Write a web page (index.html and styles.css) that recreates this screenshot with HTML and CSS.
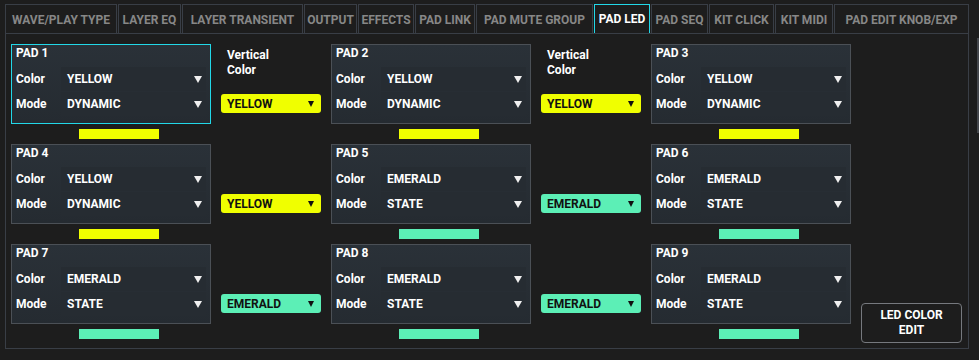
FILE: index.html
```html
<!DOCTYPE html>
<html lang="en">
<head>
    <meta charset="UTF-8">
    <title>Pad LED</title>
    <link rel="stylesheet" href="styles.css">
</head>
<body>
    <div class="tabs">
        <div class="tab">WAVE/PLAY TYPE</div>
        <div class="tab">LAYER EQ</div>
        <div class="tab">LAYER TRANSIENT</div>
        <div class="tab">OUTPUT</div>
        <div class="tab">EFFECTS</div>
        <div class="tab">PAD LINK</div>
        <div class="tab">PAD MUTE GROUP</div>
        <div class="tab active">PAD LED</div>
        <div class="tab">PAD SEQ</div>
        <div class="tab">KIT CLICK</div>
        <div class="tab">KIT MIDI</div>
        <div class="tab">PAD EDIT KNOB/EXP</div>
    </div>

    <div class="panel">
        <div class="scroll"></div>
        <div class="grid">
            <!-- row 1 -->
            <div class="pad-cell">
                <div class="card selected">
                    <div class="card-title">PAD 1</div>
                    <div class="row"><span>Color</span><div class="sel">YELLOW<i></i></div></div>
                    <div class="row"><span>Mode</span><div class="sel">DYNAMIC<i></i></div></div>
                </div>
                <div class="bar yellow"></div>
            </div>
            <div class="side first">
                <div class="vlabel">Vertical<br>Color</div>
                <div class="drop yellow">YELLOW<i></i></div>
            </div>
            <div class="pad-cell">
                <div class="card">
                    <div class="card-title">PAD 2</div>
                    <div class="row"><span>Color</span><div class="sel">YELLOW<i></i></div></div>
                    <div class="row"><span>Mode</span><div class="sel">DYNAMIC<i></i></div></div>
                </div>
                <div class="bar yellow"></div>
            </div>
            <div class="side first">
                <div class="vlabel">Vertical<br>Color</div>
                <div class="drop yellow">YELLOW<i></i></div>
            </div>
            <div class="pad-cell">
                <div class="card">
                    <div class="card-title">PAD 3</div>
                    <div class="row"><span>Color</span><div class="sel">YELLOW<i></i></div></div>
                    <div class="row"><span>Mode</span><div class="sel">DYNAMIC<i></i></div></div>
                </div>
                <div class="bar yellow"></div>
            </div>
            <div class="side"></div>

            <!-- row 2 -->
            <div class="pad-cell">
                <div class="card">
                    <div class="card-title">PAD 4</div>
                    <div class="row"><span>Color</span><div class="sel">YELLOW<i></i></div></div>
                    <div class="row"><span>Mode</span><div class="sel">DYNAMIC<i></i></div></div>
                </div>
                <div class="bar yellow"></div>
            </div>
            <div class="side">
                <div class="drop yellow">YELLOW<i></i></div>
            </div>
            <div class="pad-cell">
                <div class="card">
                    <div class="card-title">PAD 5</div>
                    <div class="row"><span>Color</span><div class="sel">EMERALD<i></i></div></div>
                    <div class="row"><span>Mode</span><div class="sel">STATE<i></i></div></div>
                </div>
                <div class="bar emerald"></div>
            </div>
            <div class="side">
                <div class="drop emerald">EMERALD<i></i></div>
            </div>
            <div class="pad-cell">
                <div class="card">
                    <div class="card-title">PAD 6</div>
                    <div class="row"><span>Color</span><div class="sel">EMERALD<i></i></div></div>
                    <div class="row"><span>Mode</span><div class="sel">STATE<i></i></div></div>
                </div>
                <div class="bar emerald"></div>
            </div>
            <div class="side"></div>

            <!-- row 3 -->
            <div class="pad-cell">
                <div class="card">
                    <div class="card-title">PAD 7</div>
                    <div class="row"><span>Color</span><div class="sel">EMERALD<i></i></div></div>
                    <div class="row"><span>Mode</span><div class="sel">STATE<i></i></div></div>
                </div>
                <div class="bar emerald"></div>
            </div>
            <div class="side">
                <div class="drop emerald">EMERALD<i></i></div>
            </div>
            <div class="pad-cell">
                <div class="card">
                    <div class="card-title">PAD 8</div>
                    <div class="row"><span>Color</span><div class="sel">EMERALD<i></i></div></div>
                    <div class="row"><span>Mode</span><div class="sel">STATE<i></i></div></div>
                </div>
                <div class="bar emerald"></div>
            </div>
            <div class="side">
                <div class="drop emerald">EMERALD<i></i></div>
            </div>
            <div class="pad-cell">
                <div class="card">
                    <div class="card-title">PAD 9</div>
                    <div class="row"><span>Color</span><div class="sel">EMERALD<i></i></div></div>
                    <div class="row"><span>Mode</span><div class="sel">STATE<i></i></div></div>
                </div>
                <div class="bar emerald"></div>
            </div>
            <div class="side">
                <button class="edit-btn">LED COLOR<br>EDIT</button>
            </div>
        </div>
    </div>
</body>
</html>
```

FILE: styles.css
```css
body {
    margin: 0;
    background-color: #1d1d1d;
    color: #ffffff;
    font-family: Roboto, "Liberation Sans", sans-serif;
    font-weight: 700;
    font-size: 12px;
}

.tabs {
    display: grid;
    grid-template-columns: 112px 63px 121px 53px 56px 60px 117px 56px 57px 65px 58px 135px;
    column-gap: 1px;
    padding: 4px 0 0 5px;
}

.tab {
    box-sizing: border-box;
    height: 30px;
    border: 1px solid #393e46;
    border-bottom: none;
    color: #878787;
    display: flex;
    align-items: center;
    justify-content: center;
    white-space: nowrap;
}

.tab.active {
    border: 1px solid #22d8e8;
    color: #ffffff;
}

.panel {
    position: relative;
    box-sizing: border-box;
    width: 964px;
    height: 316px;
    margin-left: 5px;
    margin-top: -1px;
    border: 1px solid #393e46;
    padding: 10px 0 0 5px;
}

.scroll {
    position: absolute;
    right: -11px;
    top: 4px;
    width: 2px;
    height: 95px;
    background-color: #44474c;
}

.grid {
    display: grid;
    grid-template-columns: 200px 100px 200px 100px 200px 100px;
    column-gap: 10px;
    row-gap: 5px;
}

.pad-cell {
    display: flex;
    flex-direction: column;
    gap: 5px;
}

.card {
    box-sizing: border-box;
    height: 80px;
    border: 1px solid #4b5056;
    background: linear-gradient(180deg, #2a3138, #252b31);
    padding: 1px 4px 0 4px;
}

.card.selected {
    border-color: #22d8e8;
}

.card-title {
    line-height: 15px;
    height: 21px;
}

.row {
    display: grid;
    grid-template-columns: 45px 1fr;
    align-items: center;
    height: 24px;
    margin-bottom: 1px;
}

.sel {
    height: 100%;
    display: flex;
    align-items: center;
    justify-content: space-between;
    padding: 0 4px 0 6px;
    background-color: #262c32;
}

/* dropdown arrows */
.sel i {
    width: 0;
    height: 0;
    border-left: 4px solid transparent;
    border-right: 4px solid transparent;
    border-top: 7px solid #f0f0f0;
}

.bar {
    width: 80px;
    height: 10px;
    margin-left: 68px;
}

.yellow {
    background-color: #f0ff00;
}

.emerald {
    background-color: #5cefb6;
}

.side {
    display: flex;
    flex-direction: column;
    padding-top: 50px;
}

.side.first {
    padding-top: 4px;
}

.vlabel {
    line-height: 15px;
    height: 30px;
    margin: 0 0 16px 6px;
}

.drop {
    box-sizing: border-box;
    height: 19px;
    border-radius: 3px;
    color: #111111;
    display: flex;
    align-items: center;
    justify-content: space-between;
    padding: 0 7px 0 6px;
}

.drop i {
    width: 0;
    height: 0;
    border-left: 3px solid transparent;
    border-right: 3px solid transparent;
    border-top: 6px solid #111111;
}

.edit-btn {
    margin-top: 9px;
    width: 101px;
    height: 40px;
    border: 1px solid #76797e;
    border-radius: 4px;
    background: transparent;
    color: #ffffff;
    font-family: inherit;
    font-weight: 700;
    font-size: 12px;
    line-height: 15px;
    padding: 0;
}
```
